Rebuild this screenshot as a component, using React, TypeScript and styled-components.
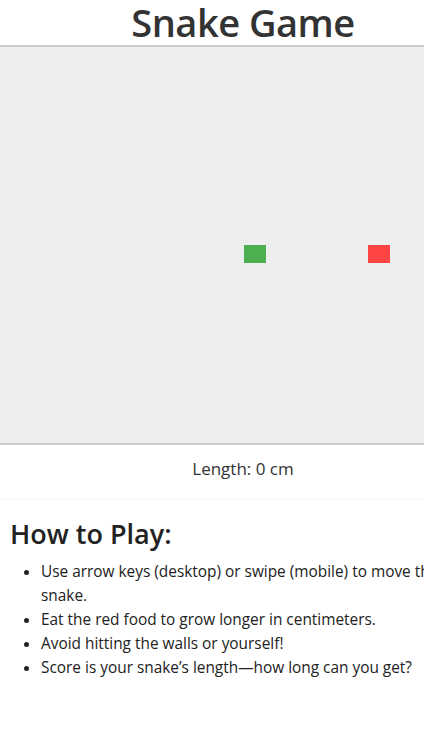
import * as React from 'react'
import styled, { createGlobalStyle } from 'styled-components'

const GlobalStyle = createGlobalStyle`
  html, body {
    margin: 0;
    padding: 0;
    background: #fff;
    overflow: hidden;
  }
  body {
    font-family: 'Open Sans', 'Noto Sans', sans-serif;
    color: #333;
  }
`

const Page = styled.div`
  width: 486px;
`

const Header = styled.header`
  height: 45px;
  display: flex;
  align-items: center;
  justify-content: center;
`

const Title = styled.h1`
  margin: 0;
  font-size: 38px;
  font-weight: 600;
  letter-spacing: -0.5px;
  line-height: 45px;
  color: #333;
`

const Board = styled.div`
  position: relative;
  height: 396px;
  background: #eeeeee;
  border-top: 2px solid #cccccc;
  border-bottom: 2px solid #cccccc;
`

const Cell = styled.div<{ $color: string }>`
  position: absolute;
  width: 22px;
  height: 18px;
  background: ${p => p.$color};
`

const Score = styled.div`
  height: 55px;
  box-sizing: border-box;
  padding-bottom: 9px;
  display: flex;
  align-items: center;
  justify-content: center;
  font-size: 17px;
  color: #333;
`

const Card = styled.section`
  height: 210px;
  box-sizing: border-box;
  padding: 18px 10px 0;
  box-shadow: 0 0 3px rgba(0, 0, 0, 0.08);
`

const CardTitle = styled.h2`
  margin: 0 0 10px;
  font-size: 27px;
  font-weight: 600;
  line-height: 32px;
  color: #222;
`

const Rules = styled.ul`
  margin: 0;
  padding-left: 31px;
  width: 440px;
`

const Rule = styled.li`
  font-size: 15.4px;
  line-height: 24px;
  color: #222;
`

const snake = [{ x: 244, y: 198 }]
const food = { x: 368, y: 198 }

export default function App() {
  return (
    <Page>
      <GlobalStyle />
      <Header>
        <Title>Snake Game</Title>
      </Header>
      <Board>
        {snake.map((s, i) => (
          <Cell key={i} $color="#4caf50" style={{ left: s.x, top: s.y }} />
        ))}
        <Cell $color="#ff4444" style={{ left: food.x, top: food.y }} />
      </Board>
      <Score>Length: 0 cm</Score>
      <Card>
        <CardTitle>How to Play:</CardTitle>
        <Rules>
          <Rule>Use arrow keys (desktop) or swipe (mobile) to move the snake.</Rule>
          <Rule>Eat the red food to grow longer in centimeters.</Rule>
          <Rule>Avoid hitting the walls or yourself!</Rule>
          <Rule>Score is your snake’s length—how long can you get?</Rule>
        </Rules>
      </Card>
    </Page>
  )
}
